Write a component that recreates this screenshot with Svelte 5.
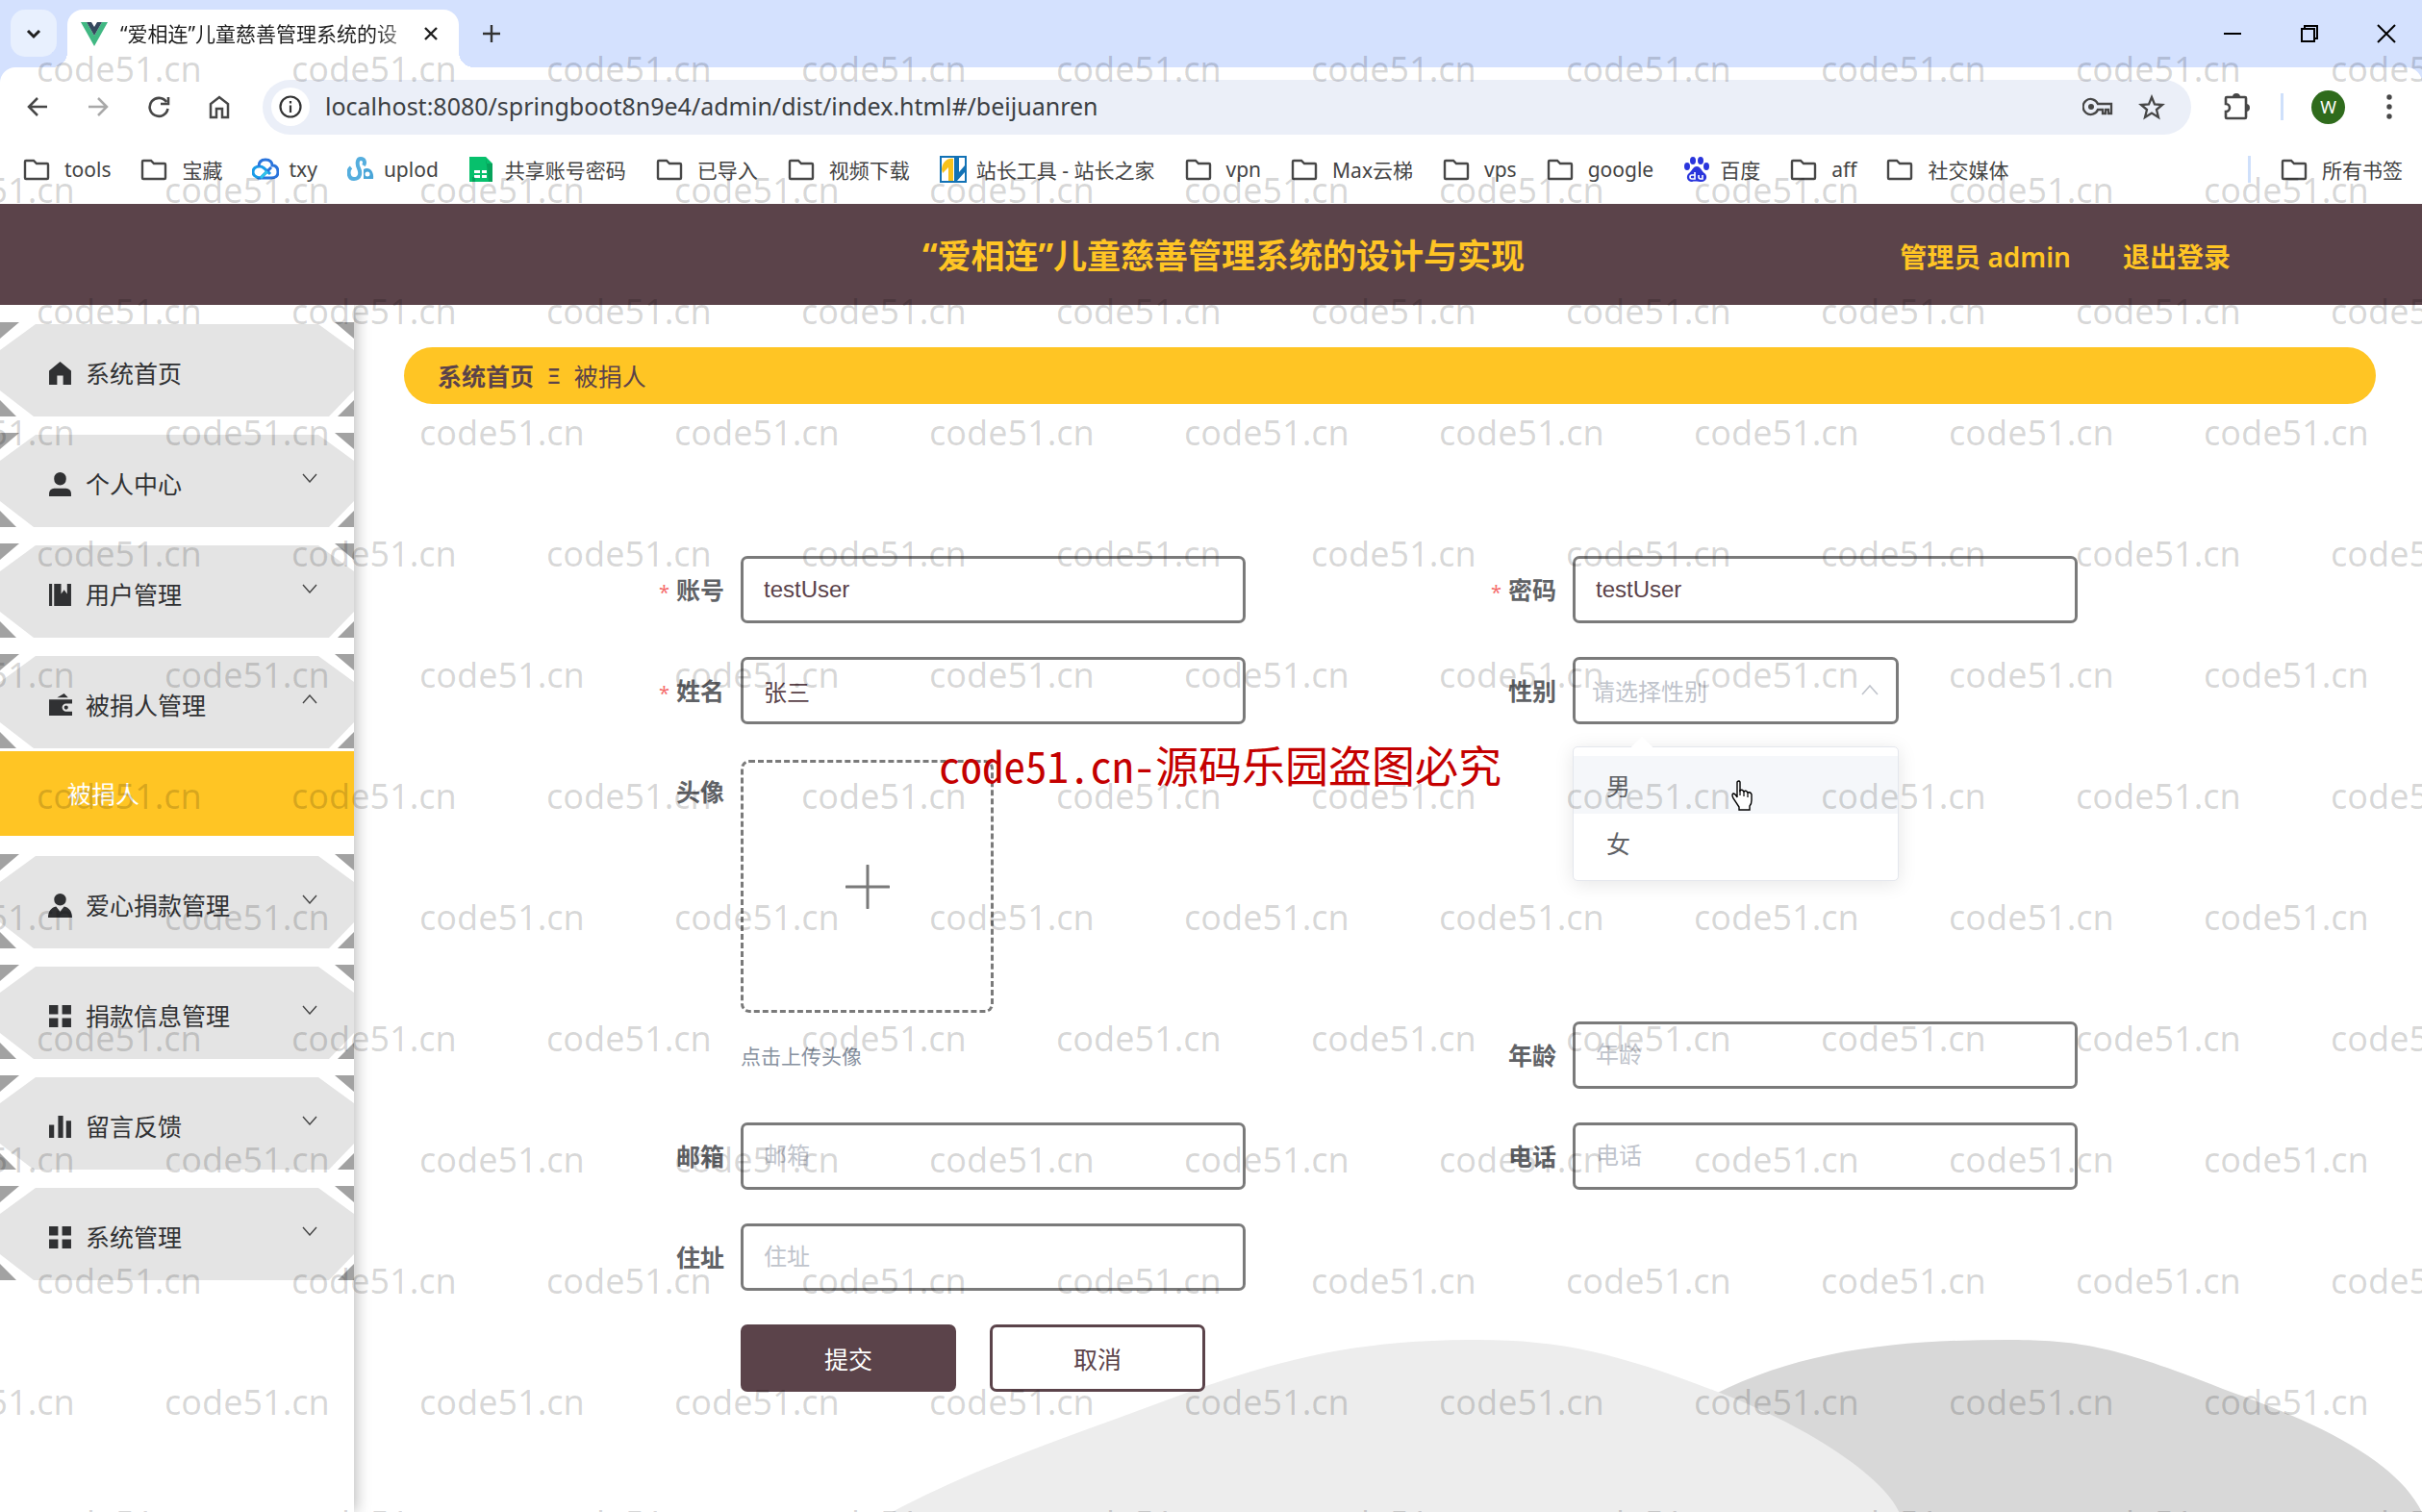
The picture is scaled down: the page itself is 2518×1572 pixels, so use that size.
<script>
  const bookmarks = [
    { icon: 'folder', text: 'tools' },
    { icon: 'folder', text: '宝藏' },
    { icon: 'cloud', text: 'txy' },
    { icon: 'upyun', text: 'uplod' },
    { icon: 'sheet', text: '共享账号密码' },
    { icon: 'folder', text: '已导入' },
    { icon: 'folder', text: '视频下载' },
    { icon: 'chinaz', text: '站长工具 - 站长之家' },
    { icon: 'folder', text: 'vpn' },
    { icon: 'folder', text: 'Max云梯' },
    { icon: 'folder', text: 'vps' },
    { icon: 'folder', text: 'google' },
    { icon: 'paw', text: '百度' },
    { icon: 'folder', text: 'aff' },
    { icon: 'folder', text: '社交媒体' }
  ];

  const menuTop = [
    { icon: 'home', text: '系统首页', arrow: '' },
    { icon: 'user', text: '个人中心', arrow: 'down' },
    { icon: 'book', text: '用户管理', arrow: 'down' },
    { icon: 'wallet', text: '被捐人管理', arrow: 'up' }
  ];
  const menuBottom = [
    { icon: 'person', text: '爱心捐款管理', arrow: 'down' },
    { icon: 'grid', text: '捐款信息管理', arrow: 'down' },
    { icon: 'bars', text: '留言反馈', arrow: 'down' },
    { icon: 'grid', text: '系统管理', arrow: 'down' }
  ];

  const menuPaths = {
    home: 'M12 0 L23 9 V23 H15 V14 H9 V23 H1 V9 Z',
    user: 'M12 0 a6 6 0 0 1 6 6 v1 a6 6 0 0 1 -12 0 V6 a6 6 0 0 1 6 -6 Z M6 16 H18 a5 5 0 0 1 5 5 V24 H1 V21 a5 5 0 0 1 5 -5 Z',
    book: 'M1 1 H4 V23 H1 Z M6 1 H13 V11 L16 7 L19 11 V1 H23 V23 H6 Z',
    wallet: 'M9 4 L16 0 L20 4 Z M1 6 H24 V10 H18 a4 4 0 0 0 0 8 H24 V22 H1 Z M18 12 a2 2 0 1 1 0 4 a2 2 0 0 1 0 -4 Z',
    person: 'M12 0 a6 6 0 1 1 0 12 a6 6 0 0 1 0 -12 Z M8 13 L12 18 L16 13 C21 14 24 18 24 24 H0 C0 18 3 14 8 13 Z',
    grid: 'M1 1 H10 V10 H1 Z M14 1 H23 V10 H14 Z M1 14 H10 V23 H1 Z M14 14 H23 V23 H14 Z',
    bars: 'M1 10 H6 V23 H1 Z M10 1 H15 V23 H10 Z M18 6 H23 V23 H18 Z'
  };

  const markRows = Array.from({ length: 13 }, (_, i) => i);
  const markCols = Array.from({ length: 11 }, (_, i) => i);

  let account = $state('testUser');
  let password = $state('testUser');
  let fullName = $state('张三');
  let gender = $state('');
</script>

{#snippet siteIcon(kind)}
  <svg class="bm-icon" viewBox="0 0 28 28" aria-hidden="true">
    {#if kind === 'folder'}
      <path d="M3 5 H11 L14 8 H25 Q26 8 26 9 V23 Q26 24 25 24 H3 Q2 24 2 23 V6 Q2 5 3 5 Z" fill="none" stroke="#474747" stroke-width="2.4" />
    {:else if kind === 'cloud'}
      <path d="M9 23 C3 23 1 19 1 17 C1 13 4 11 8 11 C11 11 13 13 19 19" fill="none" stroke="#1a9be8" stroke-width="3" />
      <path d="M7 11 C7 6 10 4 14 4 C19 4 21 7 21 10 C26 10 27 14 27 17 C27 21 24 23 20 23 H9 L20 12" fill="none" stroke="#2a74dc" stroke-width="3" />
      <path d="M9 23 L16 16" stroke="#30c4ea" stroke-width="3" />
    {:else if kind === 'upyun'}
      <path d="M4 12 C0 15 1 24 7 24 C14 24 14 17 12 13 C10 9 10 3 14 3 C18 3 19 7 17 10" fill="none" stroke="#55aede" stroke-width="4" />
      <path d="M17 14 C23 11 28 16 27 24 H17 Z" fill="#49a5d8" /><circle cx="21" cy="19" r="2.5" fill="#fff" />
    {:else if kind === 'sheet'}
      <path d="M1 1 H18 L25 8 V27 H1 Z" fill="#07c06c" /><path d="M18 1 V8 H25 V27 H21 Z" fill="#06a35b" />
      <path d="M6 15 H12 V18 H6 Z M14 15 H19 V18 H14 Z M6 20 H12 V23 H6 Z M14 20 H19 V23 H14 Z" fill="#fff" />
    {:else if kind === 'chinaz'}
      <path d="M1 1 H27 V27 H1 Z" fill="#fff" stroke="#1272b5" stroke-width="2" />
      <path d="M2 14 C3 6 8 2 14 3 V26 H9 V12 L3 18 Z" fill="#f8c21c" />
      <path d="M15 2 H20 V17 L26 10 V17 L18 26 H15 Z" fill="#1272b5" />
    {:else if kind === 'paw'}
      <g fill="#2a35dc">
        <ellipse cx="4" cy="11" rx="3" ry="4" /><ellipse cx="10" cy="5" rx="3" ry="4" />
        <ellipse cx="18" cy="5" rx="3" ry="4" /><ellipse cx="24" cy="11" rx="3" ry="4" />
        <path d="M14 11 C18 11 19 16 22 18 C26 21 24 27 19 27 C16 27 12 26 9 27 C4 27 2 21 6 18 C9 16 10 11 14 11 Z" />
      </g>
      <path d="M12 17 V24 H9 Q7 24 7 22 Q7 20 9 20 H12 M16 20 V22 Q16 24 18 24 H20 V20" fill="none" stroke="#fff" stroke-width="1.6" />
    {/if}
  </svg>
{/snippet}

{#snippet menuItem(item)}
  <li>
    <button class="menu-item" type="button">
      <svg class="plate" viewBox="0 0 368 98" preserveAspectRatio="none" aria-hidden="true">
        <path d="M0 0 H20 L0 17 Z M348 0 H368 V17 Z M0 81 L17 98 H0 Z M368 81 V98 H351 Z" fill="#a2a2a2" />
        <path d="M37 2 H331 L368 29 V71 L342 98 H35 L0 71 V29 Z" fill="#e4e4e4" />
      </svg>
      <svg class="menu-icon" viewBox="0 0 24 24" aria-hidden="true"><path d={menuPaths[item.icon]} fill="#303133" /></svg>
      <span class="menu-text">{item.text}</span>
      {#if item.arrow}
        <svg class="arrow" viewBox="0 0 16 10" aria-hidden="true">
          <path d={item.arrow === 'up' ? 'M1 9 L8 1 L15 9' : 'M1 1 L8 9 L15 1'} fill="none" stroke="#444" stroke-width="1.4" />
        </svg>
      {/if}
    </button>
  </li>
{/snippet}

<div class="page">
  <div class="tabstrip">
    <button class="tab-search" type="button" aria-label="搜索标签页">
      <svg width="16" height="12" viewBox="0 0 16 12"><path d="M2 3 L8 9 L14 3" fill="none" stroke="#1f1f1f" stroke-width="3" /></svg>
    </button>
    <div class="tab">
      <svg width="28" height="25" viewBox="0 0 28 25" aria-hidden="true">
        <path d="M0 0 H6 L14 14 L22 0 H28 L14 25 Z" fill="#41b883" /><path d="M6 0 H11 L14 5 L17 0 H22 L14 14 Z" fill="#35495e" />
      </svg>
      <span class="tab-title">“爱相连”儿童慈善管理系统的设</span>
      <button class="plain" type="button" aria-label="关闭标签页">
        <svg width="16" height="16" viewBox="0 0 16 16"><path d="M2 2 L14 14 M14 2 L2 14" stroke="#1f1f1f" stroke-width="2.4" /></svg>
      </button>
    </div>
    <button class="plain new-tab" type="button" aria-label="新标签页">
      <svg width="20" height="20" viewBox="0 0 20 20"><path d="M10 1 V19 M1 10 H19" stroke="#333" stroke-width="2.4" /></svg>
    </button>
    <div class="window-buttons">
      <button class="plain" type="button" aria-label="最小化"><svg width="20" height="20" viewBox="0 0 20 20"><path d="M1 10 H19" stroke="#000" stroke-width="2" /></svg></button>
      <button class="plain" type="button" aria-label="还原"><svg width="20" height="20" viewBox="0 0 20 20"><path d="M2 5 H15 V18 H2 Z M5 5 V2 H18 V15 H15" fill="none" stroke="#000" stroke-width="2" /></svg></button>
      <button class="plain" type="button" aria-label="关闭"><svg width="20" height="20" viewBox="0 0 20 20"><path d="M1 1 L19 19 M19 1 L1 19" stroke="#000" stroke-width="2" /></svg></button>
    </div>
  </div>

  <div class="chrome">
    <div class="toolbar">
      <button class="nav" type="button" aria-label="后退"><svg width="24" height="24" viewBox="0 0 24 24"><path d="M22 12 H3 M12 3 L3 12 L12 21" fill="none" stroke="#474747" stroke-width="2.5" /></svg></button>
      <button class="nav" type="button" aria-label="前进"><svg width="24" height="24" viewBox="0 0 24 24"><path d="M2 12 H21 M12 3 L21 12 L12 21" fill="none" stroke="#a9a9a9" stroke-width="2.5" /></svg></button>
      <button class="nav" type="button" aria-label="刷新"><svg width="24" height="24" viewBox="0 0 24 24"><path d="M20 7 A9.500 9.500 0 1 0 21.500 14 M22 2 V9 H14" fill="none" stroke="#474747" stroke-width="2.6" /></svg></button>
      <button class="nav" type="button" aria-label="主页"><svg width="24" height="26" viewBox="0 0 24 26"><path d="M3 24 V10 L12 3 L21 10 V24 H15 V15 H9 V24 Z" fill="none" stroke="#474747" stroke-width="2.5" /></svg></button>
      <div class="address">
        <button class="info" type="button" aria-label="网站信息"><svg width="24" height="24" viewBox="0 0 24 24"><circle cx="12" cy="12" r="10.500" fill="none" stroke="#333" stroke-width="2.2" /><path d="M12 10.500 V18 M12 6 V8.500" stroke="#333" stroke-width="2.200" /></svg></button>
        <input class="url" aria-label="地址" value="localhost:8080/springboot8n9e4/admin/dist/index.html#/beijuanren" />
        <button class="plain" type="button" aria-label="密码"><svg width="32" height="20" viewBox="0 0 32 20"><path d="M16 7 H30 V17 H27 V13 H24 V17 H21 V13 H16 A8 8 0 1 1 16 7 Z" fill="none" stroke="#474747" stroke-width="2.3" /><circle cx="9" cy="10" r="3" fill="#474747" /></svg></button>
        <button class="plain" type="button" aria-label="收藏"><svg width="28" height="27" viewBox="0 0 28 27"><path d="M14 3 L17 10.500 L25 11 L19 16 L21 24 L14 19.500 L7 24 L9 16 L3 11 L11 10.500 Z" fill="none" stroke="#474747" stroke-width="2.300" /></svg></button>
      </div>
      <button class="plain ext" type="button" aria-label="扩展程序"><svg width="30" height="30" viewBox="0 0 30 30"><path d="M3 6 Q3 5 4 5 H23 Q24 5 24 6 V26 Q24 27 23 27 H4 Q3 27 3 26 V20 A4 4 0 0 0 3 12 Z" fill="none" stroke="#474747" stroke-width="2.600" /><path d="M10 5 a4 4 0 0 1 8 0 Z M24 12 a4 4 0 0 1 0 8 Z" fill="#474747" /></svg></button>
      <i class="rule"></i>
      <button class="avatar" type="button" aria-label="个人资料">W</button>
      <button class="plain" type="button" aria-label="菜单"><svg width="6" height="26" viewBox="0 0 6 26"><circle cx="3" cy="3" r="2.700" fill="#474747" /><circle cx="3" cy="13" r="2.700" fill="#474747" /><circle cx="3" cy="23" r="2.700" fill="#474747" /></svg></button>
    </div>
    <nav class="bookmarks" aria-label="书签">
      {#each bookmarks as b}
        <a class="bm" class:folder={b.icon === 'folder'} href="#bookmark">{@render siteIcon(b.icon)}{b.text}</a>
      {/each}
      <i class="rule last"></i>
      <a class="bm folder" href="#bookmark">{@render siteIcon('folder')}所有书签</a>
    </nav>
  </div>

  <header class="app-header">
    <h1>“爱相连”儿童慈善管理系统的设计与实现</h1>
    <div class="account">
      <span>管理员 admin</span>
      <a href="#logout">退出登录</a>
    </div>
  </header>

  <div class="body">
    <aside class="sidebar">
      <ul class="menu">
        {#each menuTop as item}{@render menuItem(item)}{/each}
      </ul>
      <a class="sub-item" href="#/beijuanren">被捐人</a>
      <ul class="menu">
        {#each menuBottom as item}{@render menuItem(item)}{/each}
      </ul>
    </aside>

    <main>
      <svg class="hills" viewBox="0 0 1598 187" aria-hidden="true">
        <path d="M859 64 C950 18 1050 7 1164 7 C1235 7 1275 12 1392 59 C1480 90 1570 130 1598 187 H859 Z" fill="#d8d8d8" />
        <path d="M0 187 C100 135 180 110 276 74 C400 28 480 7 612 7 C700 7 760 22 859 60 C960 98 1035 150 1052 187 Z" fill="#ededed" />
      </svg>
      <nav class="crumbs" aria-label="面包屑">
        <a href="#/index">系统首页</a><span class="sep">Ξ</span><span>被捐人</span>
      </nav>

      <form onsubmit={(e) => e.preventDefault()}>
        <div class="field">
          <label for="account"><em>*</em>账号</label>
          <input id="account" bind:value={account} />
        </div>
        <div class="field">
          <label for="password"><em>*</em>密码</label>
          <input id="password" bind:value={password} />
        </div>
        <div class="field">
          <label for="name"><em>*</em>姓名</label>
          <input id="name" bind:value={fullName} />
        </div>
        <div class="field">
          <label for="gender">性别</label>
          <div class="select-box">
            <select id="gender" bind:value={gender}>
              <option value="">请选择性别</option>
              <option value="m">男</option>
              <option value="f">女</option>
            </select>
            <svg class="caret" viewBox="0 0 18 12" aria-hidden="true"><path d="M1 11 L9 2 L17 11" fill="none" stroke="#c0c4cc" stroke-width="1.600" /></svg>
            <div class="dropdown">
              <button type="button" class="choice hover" onclick={() => (gender = 'm')}>男</button>
              <button type="button" class="choice" onclick={() => (gender = 'f')}>女</button>
              <svg class="pointer" viewBox="0 0 22 32" aria-hidden="true">
                <path d="M6 2 Q8 0 9 2 V11 Q11 9 13 12 Q15 10 17 13 Q20 12 21 15 V21 Q21 25 19 27 V31 H8 V28 L2 19 Q0 15 2 14 Q4 14 6 18 Z" fill="#fff" stroke="#000" stroke-width="1.400" />
                <path d="M9 10 V16 M13 12 V17 M17 13 V18" stroke="#000" stroke-width="1.200" />
              </svg>
            </div>
          </div>
        </div>
        <div class="field">
          <span class="label">头像</span>
          <div class="upload-col">
            <button class="upload" type="button" aria-label="上传头像">
              <svg width="46" height="46" viewBox="0 0 46 46"><path d="M23 1 V45 M1 23 H45" stroke="#7a7a7a" stroke-width="3" stroke-linecap="round" /></svg>
            </button>
            <p>点击上传头像</p>
          </div>
        </div>
        <div class="field low">
          <label for="age">年龄</label>
          <input id="age" placeholder="年龄" />
        </div>
        <div class="field">
          <label for="mail">邮箱</label>
          <input id="mail" placeholder="邮箱" />
        </div>
        <div class="field">
          <label for="phone">电话</label>
          <input id="phone" placeholder="电话" />
        </div>
        <div class="field wide">
          <label for="address">住址</label>
          <input id="address" placeholder="住址" />
        </div>
        <div class="actions">
          <button class="submit" type="submit">提交</button>
          <button class="cancel" type="button">取消</button>
        </div>
      </form>
    </main>
  </div>

  <div class="marks" aria-hidden="true">
    {#each markRows as r}
      <div class="mark-row" class:shifted={r % 2 === 1}>
        {#each markCols as c (c)}<span>code51.cn</span>{/each}
      </div>
    {/each}
  </div>
  <div class="notice">code51.cn-源码乐园盗图必究</div>
</div>

<style>
  :global(body) { margin: 0; background: #fff; }
  * { box-sizing: border-box; }
  .page {
    position: relative; min-height: 100vh; display: flex; flex-direction: column; overflow: hidden;
    font-family: "Noto Sans", "Noto Sans CJK SC", sans-serif; font-size: 25px; color: #303133;
  }
  button, input, select { font: inherit; color: inherit; margin: 0; }
  a { color: inherit; text-decoration: none; }
  svg { display: block; flex: none; }
  .plain { border: 0; padding: 0; background: none; display: flex; align-items: center; }

  .tabstrip { height: 70px; background: #d4e1fe; display: flex; padding: 10px 19px 0 11px; }
  .tab-search { width: 48px; height: 49px; border: 0; border-radius: 15px; background: #e8f0fe; display: flex; align-items: center; justify-content: center; }
  .tab { position: relative; width: 407px; margin-left: 11px; padding: 0 21px 10px 14px; background: #fff; border-radius: 16px 16px 0 0; display: flex; align-items: center; gap: 13px; }
  .tab::before, .tab::after { content: ""; position: absolute; bottom: 0; width: 16px; height: 16px; }
  .tab::before { left: -16px; background: radial-gradient(circle at 0 0, #d4e1fe 16px, #fff 16px); }
  .tab::after { right: -16px; background: radial-gradient(circle at 100% 0, #d4e1fe 16px, #fff 16px); }
  .tab-title { flex: 1; min-width: 0; overflow: hidden; white-space: nowrap; font-size: 21px; line-height: 32px; color: #1f1f1f; -webkit-mask-image: linear-gradient(90deg, #000 88%, rgba(0,0,0,.3)); mask-image: linear-gradient(90deg, #000 88%, rgba(0,0,0,.3)); }
  .new-tab { margin-left: 24px; height: 50px; }
  .window-buttons { margin-left: auto; height: 50px; display: flex; gap: 60px; padding-right: 8px; }

  .chrome { height: 142px; background: linear-gradient(#d4e1fe 20px, #fff 20px); }
  .toolbar { height: 82px; background: #fff; border-radius: 16px 16px 0 0; display: flex; align-items: center; padding: 0 31px 0 7px; }
  .nav { width: 63px; height: 48px; border: 0; background: none; display: flex; align-items: center; justify-content: center; }
  .address { flex: 1; margin-left: 14px; height: 57px; border-radius: 29px; background: #ebeff8; display: flex; align-items: center; gap: 26px; padding: 0 27px 0 9px; }
  .info { width: 40px; height: 40px; border: 0; border-radius: 50%; background: #fff; padding: 0; display: flex; align-items: center; justify-content: center; }
  .url { flex: 1; min-width: 0; margin-left: -10px; border: 0; padding: 0 0 2px; background: none; font-size: 25px; color: #3c4043; outline: none; }
  .ext { margin: 0 30px 0 33px; }
  .rule { width: 3px; height: 28px; background: #cfe0fb; }
  .avatar { width: 35px; height: 35px; margin: 0 43px 0 29px; padding: 0; border: 0; border-radius: 50%; background: #2f6b1c; color: #fff; font-size: 18px; line-height: 35px; }
  .bookmarks { height: 48px; display: flex; align-items: center; gap: 31px; padding: 0 20px 0 24px; font-size: 21px; color: #444; white-space: nowrap; }
  .bm { display: flex; align-items: center; gap: 10px; }
  .bm.folder { gap: 15px; }
  .bm-icon { width: 28px; height: 28px; }
  .last { margin-left: auto; }

  .app-header { height: 105px; background: #5b434a; color: #ffc524; display: grid; grid-template-columns: 1fr auto 1fr; align-items: center; padding: 3px 0 0 26px; font-weight: 700; }
  h1 { grid-column: 2; margin: 0; font-size: 35px; line-height: 50px; }
  .account { display: flex; justify-content: flex-end; gap: 54px; padding-right: 199px; font-size: 28px; font-weight: 600; white-space: nowrap; }

  .body { flex: 1; display: flex; }
  .sidebar { position: relative; z-index: 1; flex: none; width: 368px; padding-top: 18px; background: #fff; box-shadow: 3px 0 14px rgba(0, 0, 0, .25); clip-path: inset(0 -30px 0 0); }
  .menu { list-style: none; margin: 0; padding: 0; display: flex; flex-direction: column; gap: 17px; }
  .menu-item { position: relative; width: 100%; height: 98px; border: 0; padding: 8px 38px 0 50px; background: #fff; display: flex; align-items: center; gap: 14px; text-align: left; }
  .plate { position: absolute; inset: 0; width: 100%; height: 100%; }
  .menu-icon, .menu-text, .arrow { position: relative; }
  .menu-icon { width: 25px; height: 25px; }
  .menu-text { flex: 1; line-height: 36px; white-space: nowrap; }
  .arrow { width: 16px; height: 10px; margin-bottom: 12px; }
  .sub-item { display: flex; align-items: center; height: 88px; margin: 3px 0 19px; padding: 0 0 2px 70px; background: #ffc524; color: #fff; }

  main { position: relative; flex: 1; min-width: 0; padding: 44px 48px 0 52px; }
  .hills { position: absolute; right: 0; bottom: 0; width: 74%; }
  .crumbs { position: relative; height: 59px; border-radius: 30px; background: #ffc524; color: #5b434a; display: flex; align-items: center; padding: 0 35px 2px; }
  .crumbs a { font-weight: 700; }
  .sep { margin: 0 14px; font-size: 22px; font-weight: 600; }

  form { position: relative; margin: 158px auto 0; padding: 0 160px; display: grid; grid-template-columns: 1fr 1fr; row-gap: 35px; }
  .field { display: flex; align-items: flex-start; }
  .low { align-self: end; }
  .wide, .actions { grid-column: 1 / -1; }
  label, .label { flex: none; width: 190px; padding-right: 17px; text-align: right; line-height: 70px; font-weight: 700; color: #606266; }
  label em { margin-right: 7px; color: #f56c6c; font-style: normal; font-weight: 400; font-size: 20px; line-height: 1; }
  .field input { flex: 0 1 525px; min-width: 0; height: 70px; padding: 0 21px; border: 3px solid #7a7a7a; border-radius: 7px; background: #fff; font-family: "Liberation Sans", "Noto Sans CJK SC", sans-serif; font-size: 24px; color: #5b434a; outline: none; }
  .field input::placeholder { color: #c0c4cc; opacity: 1; }
  .select-box { position: relative; width: 339px; }
  select { appearance: none; width: 100%; height: 70px; padding: 0 17px; border: 3px solid #7a7a7a; border-radius: 7px; background: #fff; font-size: 24px; color: #c0c4cc; outline: none; }
  .caret { position: absolute; right: 21px; top: 28px; width: 18px; height: 12px; }
  .dropdown { position: absolute; z-index: 2; top: 93px; left: 0; width: 100%; padding: 9px 0; background: #fff; border: 1px solid #e4e7ed; border-radius: 5px; box-shadow: 0 3px 20px rgba(0, 0, 0, .1); }
  .dropdown::before { content: ""; position: absolute; top: -8px; left: 63px; width: 16px; height: 16px; background: #fff; transform: rotate(45deg); }
  .choice { position: relative; display: block; width: 100%; height: 60px; border: 0; padding: 0 34px; background: #fff; text-align: left; color: #606266; }
  .hover { background: #f5f7fa; }
  .pointer { position: absolute; left: 164px; top: 34px; width: 22px; height: 32px; }
  .upload-col { padding-top: 2px; }
  .upload { width: 263px; height: 263px; border: 3px dashed #7a7a7a; border-radius: 9px; background: #fff; display: flex; align-items: center; justify-content: center; }
  .upload-col p { margin: 29px 0 18px; font-size: 21px; line-height: 32px; color: #8791a0; }
  .actions { display: flex; gap: 35px; padding-left: 190px; }
  .actions button { width: 224px; height: 70px; border: 3px solid #5b434a; border-radius: 7px; padding: 0; }
  .submit { background: #5b434a; color: #fff; }
  .cancel { background: #fff; color: #5b434a; }

  .marks { position: absolute; inset: 0; z-index: 5; overflow: hidden; pointer-events: none; padding-top: 9px; font-size: 36px; line-height: 126px; color: rgba(0, 0, 0, .16); }
  .mark-row { display: flex; height: 126px; padding-left: 38px; white-space: nowrap; }
  .mark-row.shifted { padding-left: 0; margin-left: -94px; }
  .mark-row span { flex: none; width: 265px; }
  .notice { position: absolute; z-index: 6; top: 763px; left: 0; right: 0; padding-left: 19px; text-align: center; pointer-events: none; font-family: "Noto Sans CJK SC", sans-serif; font-feature-settings: "hwid"; font-size: 45px; line-height: 64px; color: #c40000; }
</style>
